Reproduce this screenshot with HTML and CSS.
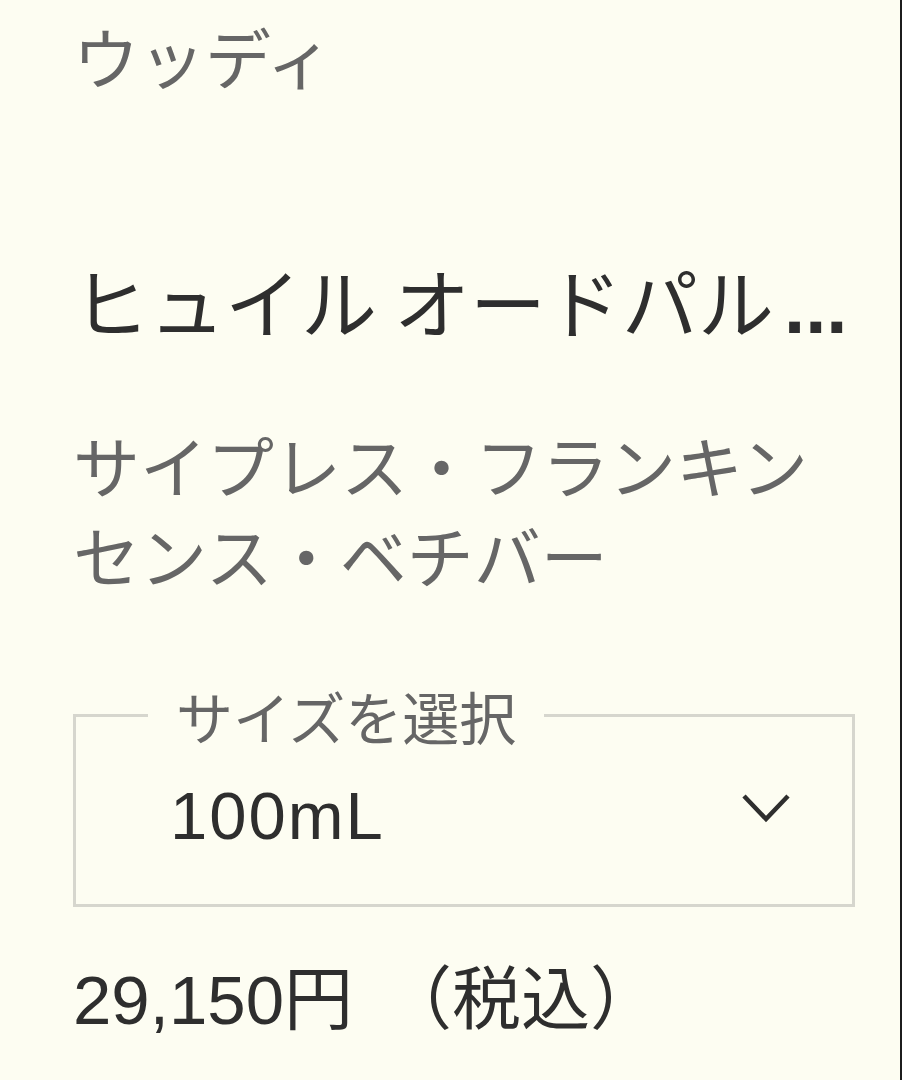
FILE: index.html
```html
<!DOCTYPE html>
<html lang="ja">
<head>
    <meta charset="UTF-8">
    <meta name="viewport" content="width=device-width, initial-scale=1.0">
    <title>ヒュイル オードパルファム</title>
    <link rel="stylesheet" href="styles.css">
</head>
<body>
    <main class="product">
        <p class="category">ウッディ</p>
        <h1 class="name">ヒュイル オードパル<span class="more">...</span></h1>
        <p class="notes">サイプレス・フランキンセンス・ベチバー</p>

        <fieldset class="size">
            <legend>サイズを選択</legend>
            <div class="size-value">
                <span>100mL</span>
                <!-- dropdown chevron -->
                <svg class="chevron" width="50" height="30" viewBox="0 0 50 30">
                    <polyline points="3,3 25,26 47,3" fill="none" stroke="#2e2e2e" stroke-width="4.5"/>
                </svg>
            </div>
        </fieldset>

        <p class="price">29,150円<span class="tax">（税込）</span></p>
    </main>
</body>
</html>
```

FILE: styles.css
```css
body {
    margin: 0;
    padding: 0;
    background-color: #fdfdf2;
    color: #2e2e2e;
    font-family: "Noto Sans CJK JP", sans-serif;
}
.product {
    box-sizing: border-box;
    min-height: 100vh;
    padding: 6px 45px 0 73px;
    border-right: 2px solid #1c1c1c;
}
.category {
    margin: 0;
    font-size: 66px;
    line-height: 99px;
    color: #666;
}
.name {
    margin: 141px 0 0;
    font-size: 76px;
    font-weight: normal;
    line-height: 108px;
    white-space: nowrap;
}
.name .more {
    margin-left: 10px;
    font-family: "Liberation Sans", sans-serif;
    font-weight: bold;
}
.notes {
    margin: 58px 0 0;
    font-size: 67px;
    line-height: 90px;
    color: #666;
}
.size {
    margin: 74px 0 0;
    padding: 0;
    border: 3px solid #d6d6ce;
}
.size legend {
    margin-left: 72px;
    padding: 0 28px;
    font-size: 57px;
    line-height: 85px;
    color: #666;
}
.size-value {
    display: flex;
    align-items: center;
    justify-content: space-between;
    height: 114px;
    padding: 0 61px 32px 94px;
    font-family: "Liberation Sans", sans-serif;
    font-size: 67px;
    letter-spacing: 2px;
}
.chevron {
    margin-bottom: 14px;
}
.price {
    margin: 41px 0 0;
    font-family: "Liberation Sans", "Noto Sans CJK JP", sans-serif;
    font-size: 69px;
    line-height: 105px;
}
.price .tax {
    margin-left: 30px;
}
```
